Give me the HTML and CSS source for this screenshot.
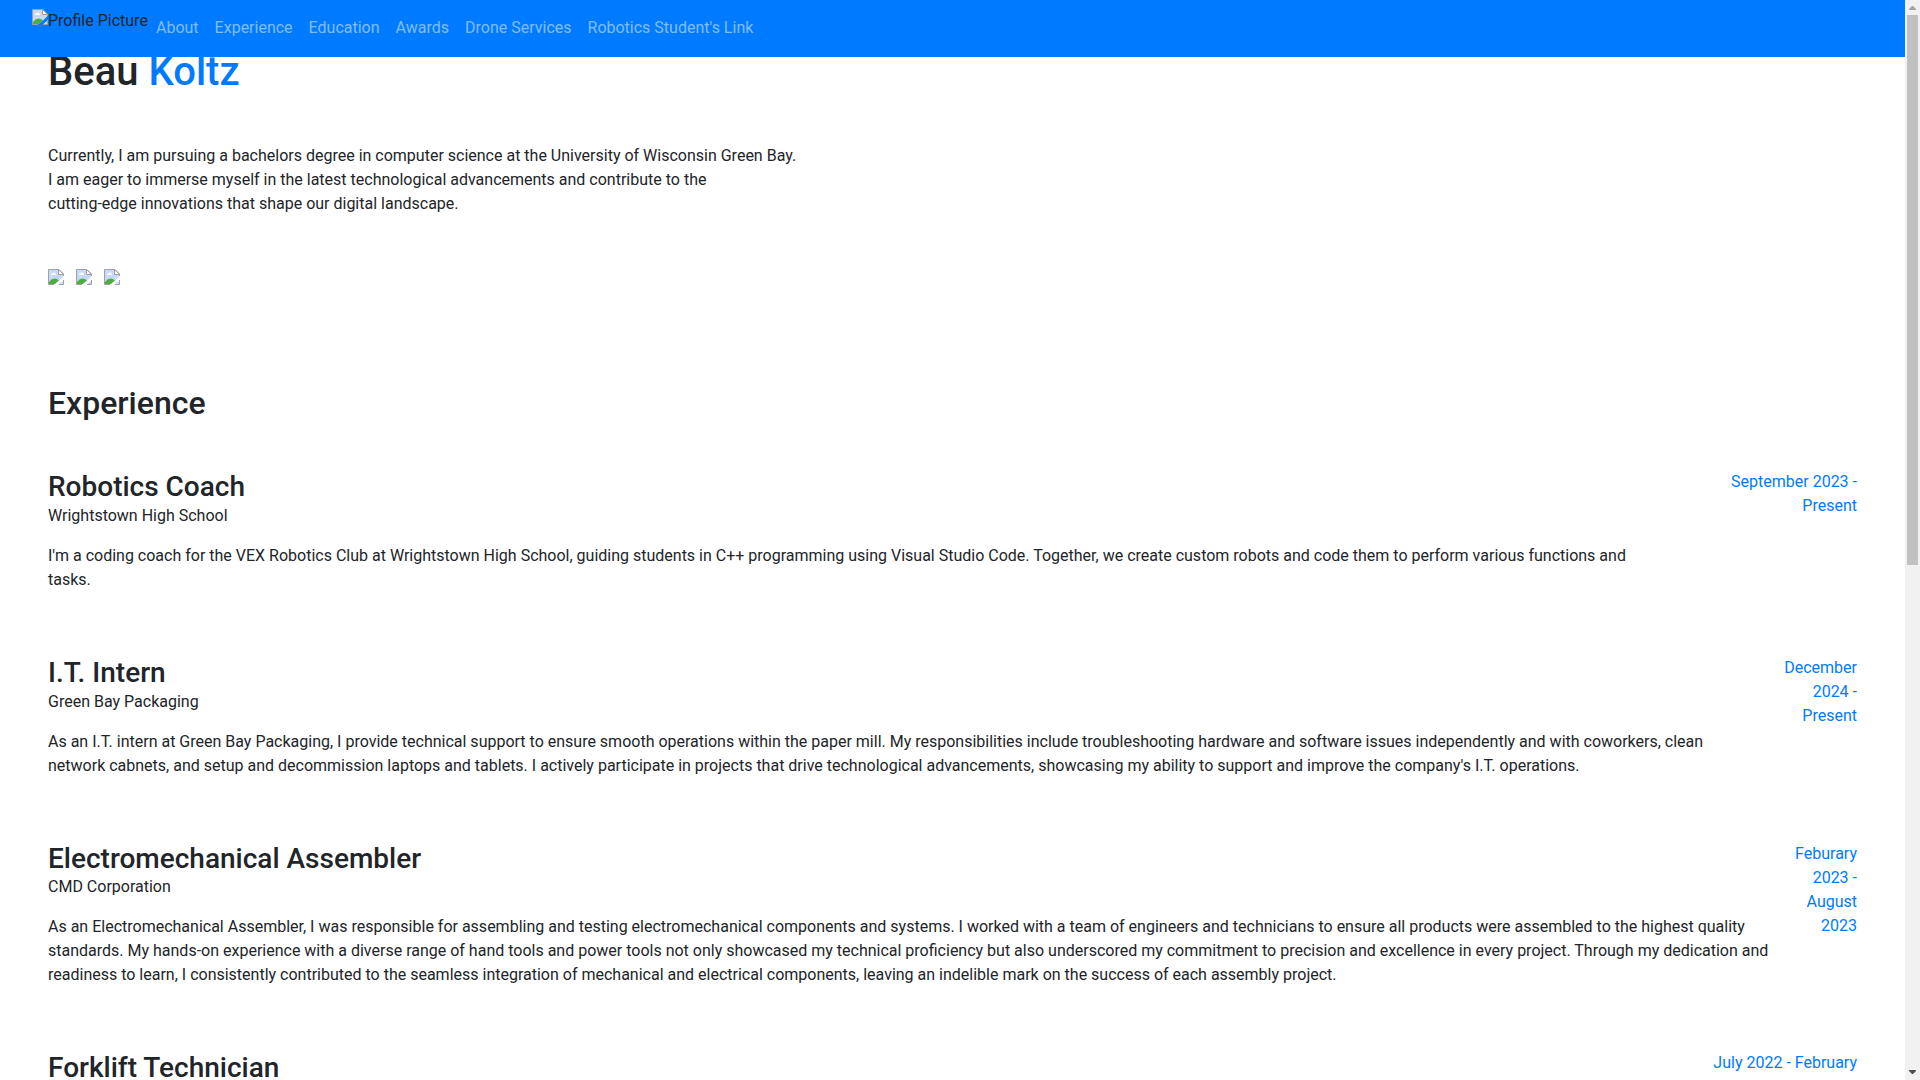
FILE: index.html
```html
<!DOCTYPE html>
<html lang="en">
<head>
    <meta charset="UTF-8">
    <meta name="viewport" content="width=device-width, initial-scale=1.0">
    <title>Beau Koltz</title>
    <link rel="stylesheet" href="styles.css">
</head>
<body>
    <div class="page">
        <nav class="navbar">
            <span class="profile">
                <svg class="broken" width="16" height="16" viewBox="0 0 16 16"><use href="#broken-image"/></svg><span class="profile-alt">Profile Picture</span>
            </span>
            <ul class="navbar-nav">
                <li><a class="nav-link" href="#about">About</a></li>
                <li><a class="nav-link" href="#experience">Experience</a></li>
                <li><a class="nav-link" href="#education">Education</a></li>
                <li><a class="nav-link" href="#awards">Awards</a></li>
                <li><a class="nav-link" href="#drone">Drone Services</a></li>
                <li><a class="nav-link" href="#robotics">Robotics Student's Link</a></li>
            </ul>
        </nav>

        <section class="about" id="about">
            <h1>Beau <span class="text-primary">Koltz</span></h1>
            <p>Currently, I am pursuing a bachelors degree in computer science at the University of Wisconsin Green Bay.<br>
                I am eager to immerse myself in the latest technological advancements and contribute to the<br>
                cutting-edge innovations that shape our digital landscape.</p>
            <div class="social-icons">
                <a href="#"><svg class="broken" width="16" height="16" viewBox="0 0 16 16"><use href="#broken-image"/></svg></a>
                <a href="#"><svg class="broken" width="16" height="16" viewBox="0 0 16 16"><use href="#broken-image"/></svg></a>
                <a href="#"><svg class="broken" width="16" height="16" viewBox="0 0 16 16"><use href="#broken-image"/></svg></a>
            </div>
        </section>

        <section class="experience" id="experience">
            <h2>Experience</h2>
            <div class="job">
                <div class="job-content">
                    <h3>Robotics Coach</h3>
                    <div>Wrightstown High School</div>
                    <p>I'm a coding coach for the VEX Robotics Club at Wrightstown High School, guiding students in C++ programming using Visual Studio Code. Together, we create custom robots and code them to perform various functions and<br>tasks.</p>
                </div>
                <div class="job-date">September 2023 -<br>Present</div>
            </div>
            <div class="job">
                <div class="job-content">
                    <h3>I.T. Intern</h3>
                    <div>Green Bay Packaging</div>
                    <p>As an I.T. intern at Green Bay Packaging, I provide technical support to ensure smooth operations within the paper mill. My responsibilities include troubleshooting hardware and software issues independently and with coworkers, clean<br>network cabnets, and setup and decommission laptops and tablets. I actively participate in projects that drive technological advancements, showcasing my ability to support and improve the company's I.T. operations.</p>
                </div>
                <div class="job-date">December<br>2024 -<br>Present</div>
            </div>
            <div class="job">
                <div class="job-content">
                    <h3>Electromechanical Assembler</h3>
                    <div>CMD Corporation</div>
                    <p>As an Electromechanical Assembler, I was responsible for assembling and testing electromechanical components and systems. I worked with a team of engineers and technicians to ensure all products were assembled to the highest quality<br>standards. My hands-on experience with a diverse range of hand tools and power tools not only showcased my technical proficiency but also underscored my commitment to precision and excellence in every project. Through my dedication and<br>readiness to learn, I consistently contributed to the seamless integration of mechanical and electrical components, leaving an indelible mark on the success of each assembly project.</p>
                </div>
                <div class="job-date">Feburary<br>2023 -<br>August<br>2023</div>
            </div>
            <div class="job">
                <div class="job-content">
                    <h3>Forklift Technician</h3>
                </div>
                <div class="job-date">July 2022 - February</div>
            </div>
        </section>
    </div>

    <div class="scrollbar">
        <svg width="15" height="15" viewBox="0 0 15 15"><path d="M4 10V9L7 6H8L11 9V10Z" fill="#a3a3a3"/></svg>
        <div class="scrollbar-thumb"></div>
        <svg class="scroll-down" width="15" height="15" viewBox="0 0 15 15"><path d="M4 5V6L7 9H8L11 6V5Z" fill="#505050"/></svg>
    </div>

    <svg class="sprite" width="0" height="0">
        <symbol id="broken-image" viewBox="0 0 16 16">
            <path d="M1 1H11L15 5V8L8 15H1Z" fill="#c6d9f8"/>
            <path d="M3 6Q3 4 5 4Q7 2 8 6Z" fill="#fff"/>
            <path d="M1 15V13Q6 7 11 11.500L7 15Z" fill="#4caf3c"/>
            <path d="M15 12V15H11Z" fill="#c6d9f8"/>
            <path d="M6 16L16 7V10L10 16Z" fill="#fff" class="tear"/>
            <path d="M6 15.500H.5V.5H11L15.500 5V7M15.500 11V15.500H11" fill="none" stroke="#a0a0a0"/>
            <path d="M10.500 .5V5.500H15.500Z" fill="#fff" stroke="#a0a0a0"/>
        </symbol>
    </svg>
</body>
</html>
```
FILE: styles.css
```css
* {
    box-sizing: border-box;
}

body {
    margin: 0;
    height: 1080px;
    overflow: hidden;
    display: flex;
    font-family: Roboto, sans-serif;
    font-size: 16px;
    line-height: 24px;
    color: #212529;
    background-color: #fff;
}

.page {
    width: 1905px;
    height: 1080px;
    overflow: hidden;
}

.navbar {
    position: fixed;
    top: 0;
    left: 0;
    width: 1905px;
    height: 57px;
    padding: 9px 32px 8px;
    display: flex;
    align-items: flex-start;
    background-color: #007bff;
    --tear: #007bff;
}

.profile {
    display: flex;
    width: 116px;
}

.profile-alt {
    white-space: nowrap;
}

.broken {
    display: block;
    flex: none;
}

.tear {
    fill: var(--tear, #fff);
}

.navbar-nav {
    display: flex;
    margin: -1px 0 0;
    padding: 0;
    list-style: none;
}

.nav-link {
    display: block;
    padding: 8px;
    color: rgba(255, 255, 255, .5);
    text-decoration: none;
}

.about {
    padding: 48px 48px 0;
}

h1, h2, h3 {
    margin: 0;
    font-weight: 500;
    line-height: 1.2;
}

h1 {
    font-size: 40px;
}

.text-primary {
    color: #007bff;
}

.about p {
    margin: 48px 0 0;
}

.social-icons {
    display: flex;
    gap: 12px;
    margin-top: 53px;
}

.experience {
    padding: 0 48px;
}

h2 {
    margin-top: 99px;
    margin-bottom: 48px;
    font-size: 32px;
}

.job {
    display: flex;
    justify-content: space-between;
    margin-bottom: 48px;
}

h3 {
    font-size: 28px;
}

.job p {
    margin: 16px 0;
    white-space: nowrap;
}

.job-date {
    color: #007bff;
    text-align: right;
    white-space: nowrap;
}

.scrollbar {
    display: flex;
    flex-direction: column;
    width: 15px;
    height: 1080px;
    background-color: #f1f1f1;
}

.scrollbar-thumb {
    width: 11px;
    height: 550px;
    margin: 0 2px;
    background-color: #c1c1c1;
}

.scroll-down {
    margin-top: auto;
}

.sprite {
    position: absolute;
}
```
